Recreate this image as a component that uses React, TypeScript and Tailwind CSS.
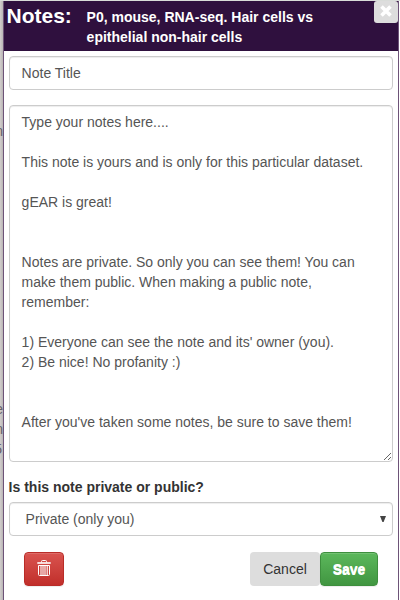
import React from "react";

const note = `Type your notes here....

This note is yours and is only for this particular dataset.

gEAR is great!


Notes are private. So only you can see them! You can
make them public. When making a public note,
remember:

1) Everyone can see the note and its' owner (you).
2) Be nice! No profanity :)


After you've taken some notes, be sure to save them!`;

const field =
  "block w-full rounded-[4px] border border-[#ccc] bg-white text-[14px] leading-5 text-[#555] shadow-[inset_0_1px_1px_rgba(0,0,0,0.075)]";

function TrashIcon() {
  return (
    <svg width="14" height="16" viewBox="0 0 14 16" fill="none" stroke="white" className="-mt-[3px]">
      <path d="M4.5 2.5V1.5Q4.5.5 5.5.5H8.5Q9.5.5 9.5 1.5V2.5" />
      <path d="M.3 3H13.7" strokeWidth="1.6" />
      <path d="M1.5 5.5H12.5V14.5Q12.5 15.5 11.5 15.5H2.5Q1.5 15.5 1.5 14.5Z" />
      <path d="M4 6V15M6 6V15M8 6V15M10.2 6V15" strokeWidth="1.1" />
    </svg>
  );
}

export default function App() {
  return (
    <div className="flex h-[600px] w-[400px] overflow-hidden border-t border-[#d9dcd9] bg-white font-['Liberation_Sans',Arial,sans-serif] text-[14px] leading-5 text-[#333]">
      <div className="flex w-[3px] shrink-0 flex-col items-end overflow-hidden bg-linear-to-r from-[#d2cecd] to-[#b9b5b5] text-[#67606b]">
        <span className="mt-[120px]">n</span>
        <span className="mt-[258px]">e</span>
        <span>n</span>
        <span className="pr-px">5</span>
      </div>
      <main className="flex w-[396px] shrink-0 flex-col border-x border-[#6d5378] bg-white">
        <header className="flex h-[50px] shrink-0 items-start bg-[#2f103e] font-bold text-white">
          <h1 className="w-[82.6px] shrink-0 pl-[2.5px] pt-[3px] text-[21px] leading-6">Notes:</h1>
          <p className="w-[250px] pt-[6px]">
            P0, mouse, RNA-seq. Hair cells vs
            <br />
            epithelial non-hair cells
          </p>
          <button className="ml-auto flex h-[22px] w-6 items-center justify-center rounded-[3px] bg-[#ddd]">
            <svg width="12" height="12" viewBox="0 0 12 12" className="-mt-0.5" stroke="white" strokeWidth="3.6">
              <path d="M1.5 1.5L10.5 10.5M10.5 1.5L1.5 10.5" />
            </svg>
          </button>
        </header>
        <div className="flex flex-col px-[5px] pt-[5px]">
          <input className={`${field} h-[34px] px-[11.6px] py-1.5`} defaultValue="Note Title" />
          <textarea
            className={`${field} mt-[15px] h-[357px] resize overflow-hidden whitespace-pre px-[11.6px] py-1.5`}
            defaultValue={note}
          />
          <label className="-ml-[0.4px] mt-[15px] h-5 font-bold">Is this note private or public?</label>
          <div className={`${field} mt-[5px] flex h-[34px] items-center justify-between pl-[15.6px] pr-[6px]`}>
            <span>Private (only you)</span>
            <svg width="6" height="6" viewBox="0 0 6 6" fill="#444">
              <path d="M0 0H6L3.6 6H2.4Z" />
            </svg>
          </div>
          <footer className="mt-4 flex h-[34px] px-[15px]">
            <button className="flex w-10 items-center justify-center rounded-[4px] border border-[#b92c28] bg-linear-to-b from-[#d9534f] to-[#c12e2a] shadow-[inset_0_1px_0_rgba(255,255,255,0.15),0_1px_1px_rgba(0,0,0,0.075)]">
              <TrashIcon />
            </button>
            <button className="ml-auto w-[70px] rounded-[4px] bg-[#ddd]">Cancel</button>
            <button className="w-[58px] rounded-[4px] border border-[#3e8f3e] bg-linear-to-b from-[#5cb85c] to-[#419641] font-bold text-white shadow-[inset_0_1px_0_rgba(255,255,255,0.15),0_1px_1px_rgba(0,0,0,0.075)] [text-shadow:0_1px_0_#fff]">
              Save
            </button>
          </footer>
        </div>
      </main>
    </div>
  );
}
